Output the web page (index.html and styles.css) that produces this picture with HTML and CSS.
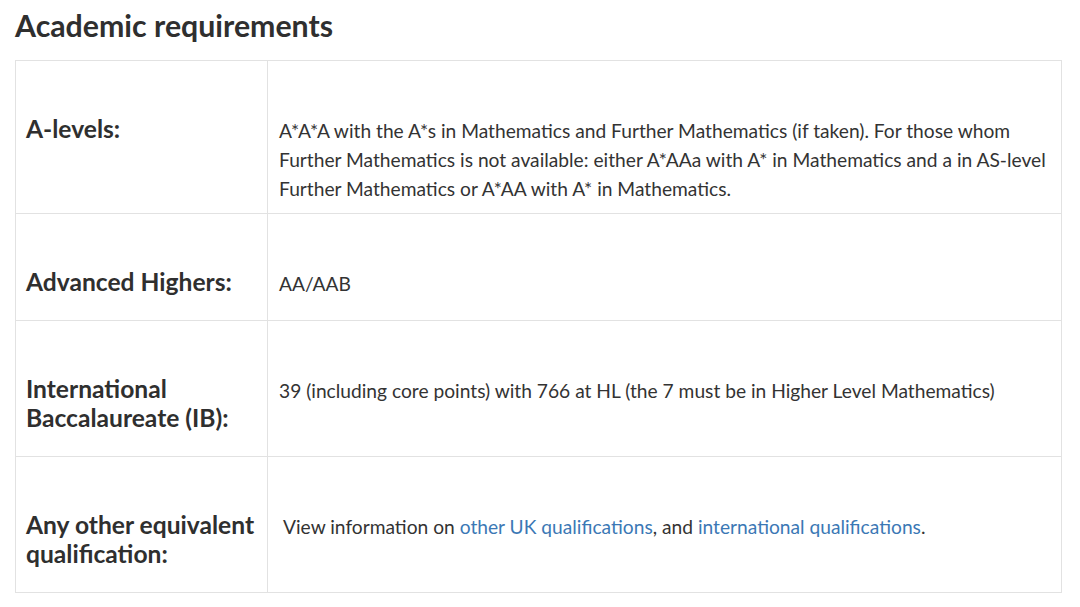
FILE: index.html
```html
<!DOCTYPE html>
<html lang="en">
<head>
<meta charset="utf-8">
<title>Academic requirements</title>
<link rel="stylesheet" href="styles.css">
</head>
<body>
<main class="page">
  <h2 class="title">Academic requirements</h2>
  <table class="req">
    <colgroup><col class="col-label"><col class="col-value"></colgroup>
    <tbody>
      <tr>
        <th class="label">A-levels:</th>
        <td class="value">A*A*A with the A*s in Mathematics and Further Mathematics (if taken). For those whom Further Mathematics is not available: either A*AAa with A* in Mathematics and a in AS-level Further Mathematics or A*AA with A* in Mathematics.</td>
      </tr>
      <tr>
        <th class="label">Advanced Highers:</th>
        <td class="value">AA/AAB</td>
      </tr>
      <tr>
        <th class="label">International Baccalaureate (IB):</th>
        <td class="value">39 (including core points) with 766 at HL (the 7 must be in Higher Level Mathematics)</td>
      </tr>
      <tr>
        <th class="label">Any other equivalent qualification:</th>
        <td class="value"><span class="indent">View information on <a href="#" class="link">other UK qualifications</a>, and <a href="#" class="link">international qualifications</a>.</span></td>
      </tr>
    </tbody>
  </table>
</main>
</body>
</html>
```
FILE: styles.css
```css
html, body {
  margin: 0;
  padding: 0;
  background: #ffffff;
}

.page {
  padding: 0 18px 0 15px;
  font-family: Lato, "Open Sans", sans-serif;
  color: #333333;
}

.title {
  margin: 0;
  padding-top: 7px;
  height: 60px;
  box-sizing: border-box;
  font-size: 30.3px;
  line-height: 36px;
  font-weight: 700;
  color: #2f2f2f;
}

.req {
  width: 1047px;
  border-collapse: collapse;
  table-layout: fixed;
  border: 1px solid #e2e2e2;
}

.col-label { width: 252px; }

.req th,
.req td {
  border: 1px solid #e2e2e2;
  vertical-align: top;
  text-align: left;
}

.label {
  padding: 53px 6px 24px 10px;
  font-size: 24.6px;
  line-height: 29px;
  font-weight: 700;
  color: #2f2f2f;
}

.value {
  padding: 55px 11px 10px 11px;
  font-size: 19.2px;
  line-height: 29px;
  font-weight: 400;
  color: #333333;
}

.indent {
  display: block;
  padding-left: 4px;
}

.link {
  color: #3b78b5;
  text-decoration: none;
}
```
